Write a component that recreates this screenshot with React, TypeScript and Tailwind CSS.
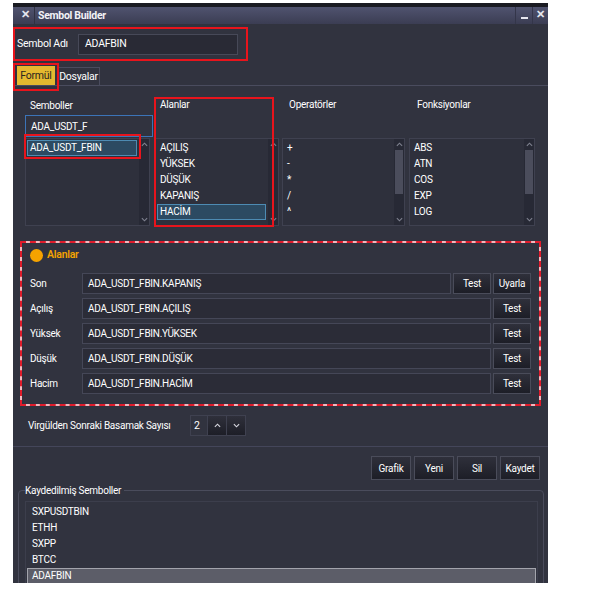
import React from 'react'

const ChevUp = () => (
  <svg viewBox="0 0 8 5" className="w-[7px] h-[5px]" fill="none" stroke="currentColor" strokeWidth={1.3}>
    <path d="M1 4L4 1L7 4" />
  </svg>
)

const ChevDown = () => (
  <svg viewBox="0 0 8 5" className="w-[7px] h-[5px]" fill="none" stroke="currentColor" strokeWidth={1.3}>
    <path d="M1 1L4 4L7 1" />
  </svg>
)

type ListProps = {
  items: string[]
  selected?: number
  thumb?: boolean
  width: string
}

const ListBox = ({ items, selected, thumb, width }: ListProps) => (
  <div className={`flex h-[88px] border border-[#3f4150] bg-[#2e303c] ${width}`}>
    <div className="flex-1 overflow-hidden pt-[1px] pl-[1px] pr-[2px]">
      {items.map((it, i) => (
        <div
          key={i}
          className={`h-[16px] leading-[14px] px-[2px] border ${
            i === selected ? 'bg-[#2c4a62] border-[#4d8bb3]' : 'border-transparent'
          }`}
        >
          {it}
        </div>
      ))}
    </div>
    <div className="w-[10px] bg-[#272935] flex flex-col items-center text-[#7e808e] py-[3px]">
      <ChevUp />
      <div className="flex-1 w-full px-[1px] py-[3px]">
        {thumb && <div className="bg-[#4b4d5c] h-[44px] w-full" />}
      </div>
      <ChevDown />
    </div>
  </div>
)

const Btn = ({ label, className = '' }: { label: string; className?: string }) => (
  <button
    className={`flex items-center justify-center border border-[#4a4c5a] bg-gradient-to-b from-[#2f303b] to-[#1d1e27] text-white ${className}`}
  >
    {label}
  </button>
)

const fieldRows = [
  { label: 'Son', value: 'ADA_USDT_FBIN.KAPANIŞ', extra: true },
  { label: 'Açılış', value: 'ADA_USDT_FBIN.AÇILIŞ' },
  { label: 'Yüksek', value: 'ADA_USDT_FBIN.YÜKSEK' },
  { label: 'Düşük', value: 'ADA_USDT_FBIN.DÜŞÜK' },
  { label: 'Hacim', value: 'ADA_USDT_FBIN.HACİM' },
]

const saved = ['SXPUSDTBIN', 'ETHH', 'SXPP', 'BTCC', 'ADAFBIN']

export default function App() {
  return (
    <div className="w-[593px] h-[593px] bg-white pt-[3px] pl-[13px] font-['Roboto',sans-serif] text-[10px] tracking-[-0.25px] text-white">
      <div className="w-[535px] h-[580px] bg-[#31333f] overflow-hidden flex flex-col">
        {/* Title bar */}
        <div className="h-[21px] shrink-0 border-t-[4px] border-[#1a1b22] bg-gradient-to-b from-[#50536f] to-[#3b3d53] flex items-center">
          <div className="w-[18px] flex justify-center ml-[3px] text-[11px] font-bold text-[#e6e6ee]">✕</div>
          <div className="h-full w-px bg-[#2f3142]" />
          <div className="ml-[3px] font-bold text-[10.5px] tracking-[-0.3px] text-[#f2f2f6]">Sembol Builder</div>
          <div className="ml-auto flex h-full items-center">
            <div className="h-full w-px bg-[#34364a]" />
            <div className="w-[16px] flex justify-center">
              <div className="w-[7px] h-[2px] bg-[#e6e6ee] mt-[4px]" />
            </div>
            <div className="h-full w-px bg-[#34364a]" />
            <div className="w-[15px] flex justify-center text-[11px] font-bold text-[#e6e6ee]">✕</div>
          </div>
        </div>

        {/* Sembol Adı */}
        <div className="mt-[3px] w-[235px] h-[34px] shrink-0 border-2 border-[#e8141c] flex items-center pl-[2px]">
          <span className="w-[61px] text-[10.5px]">Sembol Adı</span>
          <div className="w-[160px] h-[21px] bg-[#292a35] border border-[#474958] flex items-center pl-[6px] text-[10.5px]">
            ADAFBIN
          </div>
        </div>

        {/* Tabs */}
        <div className="relative mt-[2px] h-[23px] shrink-0 border-b border-[#4a4c5e] flex items-end pl-[4px]">
          <div className="h-[19px] w-[38px] bg-[#e4b92f] text-[#2a2520] flex items-center justify-center text-[10.5px]">Formül</div>
          <div className="ml-[2px] h-[18px] w-[43px] border border-b-0 border-[#4a4c5e] flex items-center justify-center text-[10.5px]">
            Dosyalar
          </div>
          <div className="absolute left-0 top-0 w-[46px] h-[28px] border-2 border-[#e8141c]" />
        </div>

        {/* Formula builder lists */}
        <div className="relative mt-[12px] pl-[12px] flex shrink-0">
          <div className="w-[128px] flex flex-col">
            <div className="h-[14px] pl-[5px] leading-[14px] mt-[1px]">Semboller</div>
            <div className="mt-[2px] h-[22px] border border-[#3c74b8] flex items-center pl-[5px]">ADA_USDT_F</div>
            <div className="mt-[1px]">
              <ListBox items={['ADA_USDT_FBIN']} selected={0} width="w-[125px]" />
            </div>
          </div>
          <div className="ml-[2px] w-[124px] flex flex-col">
            <div className="h-[14px] pl-[5px] leading-[14px]">Alanlar</div>
            <div className="mt-[26px]">
              <ListBox items={['AÇILIŞ', 'YÜKSEK', 'DÜŞÜK', 'KAPANIŞ', 'HACİM']} selected={4} width="w-[124px]" />
            </div>
          </div>
          <div className="ml-[3px] w-[123px] flex flex-col">
            <div className="h-[14px] pl-[7px] leading-[14px]">Operatörler</div>
            <div className="mt-[26px]">
              <ListBox items={['+', '-', '*', '/', '^']} thumb width="w-[123px]" />
            </div>
          </div>
          <div className="ml-[4px] w-[126px] flex flex-col">
            <div className="h-[14px] pl-[8px] leading-[14px]">Fonksiyonlar</div>
            <div className="mt-[26px]">
              <ListBox items={['ABS', 'ATN', 'COS', 'EXP', 'LOG']} thumb width="w-[126px]" />
            </div>
          </div>
          {/* annotations */}
          <div className="absolute left-[141px] top-[-1px] w-[120px] h-[130px] border-2 border-[#e8141c]" />
          <div className="absolute left-[11px] top-[36px] w-[117px] h-[25px] border-2 border-[#e8141c]" />
        </div>

        {/* Alanlar panel */}
        <div className="mt-[15px] ml-[7px] w-[521px] h-[165px] shrink-0 border-2 border-dashed border-[#e11b2b] bg-[#f2b8be]">
          <div className="h-full bg-[#31333f] pt-[5px] pl-[8px] pr-[8px]">
            <div className="h-[14px] flex items-center">
              <div className="w-[13px] h-[13px] rounded-full bg-[#f5a300]" />
              <span className="ml-[4px] text-[#f5a300] font-semibold text-[10.5px]">Alanlar</span>
            </div>
            <div className="mt-[11px] flex flex-col gap-[4px]">
              {fieldRows.map((r) => (
                <div key={r.label} className="flex h-[21px]">
                  <div className="w-[52px] flex items-center">{r.label}</div>
                  <div className="flex-1 bg-[#2b2c37] border border-[#454757] flex items-center pl-[5px]">{r.value}</div>
                  {r.extra && <Btn label="Test" className="ml-[2px] w-[38px]" />}
                  <Btn label={r.extra ? 'Uyarla' : 'Test'} className="ml-[2px] w-[38px]" />
                </div>
              ))}
            </div>
          </div>
        </div>

        {/* Decimal places */}
        <div className="mt-[9px] h-[21px] shrink-0 flex items-center pl-[15px]">
          <span className="w-[162px]">Virgülden Sonraki Basamak Sayısı</span>
          <div className="flex h-[21px] border border-[#3f4150]">
            <div className="w-[16px] flex items-center pl-[3px] text-[10.5px]">2</div>
            <button className="w-[19px] flex items-center justify-center border-l border-[#3f4150] bg-gradient-to-b from-[#2f303b] to-[#1d1e27] text-[#d8d8e0]">
              <ChevUp />
            </button>
            <button className="w-[19px] flex items-center justify-center border-l border-[#3f4150] bg-gradient-to-b from-[#2f303b] to-[#1d1e27] text-[#d8d8e0]">
              <ChevDown />
            </button>
          </div>
        </div>

        <div className="mt-[10px] border-t border-[#44465a] shrink-0" />

        {/* Action buttons */}
        <div className="mt-[9px] h-[24px] shrink-0 flex justify-end gap-[3px] pr-[8px]">
          <Btn label="Grafik" className="w-[40px]" />
          <Btn label="Yeni" className="w-[40px]" />
          <Btn label="Sil" className="w-[40px]" />
          <Btn label="Kaydet" className="w-[40px]" />
        </div>

        {/* Saved symbols */}
        <fieldset className="mt-[3px] ml-[5px] w-[526px] flex-1 border border-[#4a4c5c] rounded-[4px] pl-[6px] pr-[5px]">
          <legend className="pr-[3px]">Kaydedilmiş Semboller</legend>
          <div className="mt-[3px] border border-[#3c3e4c] h-[100px] pt-[2px] pl-[1px] pr-[1px]">
            {saved.map((s, i) => (
              <div
                key={s}
                className={`h-[16px] leading-[14px] pl-[4px] border ${
                  i === saved.length - 1 ? 'bg-[#5c5d68] border-[#a3a4ac]' : 'border-transparent'
                }`}
              >
                {s}
              </div>
            ))}
          </div>
        </fieldset>
      </div>
    </div>
  )
}
